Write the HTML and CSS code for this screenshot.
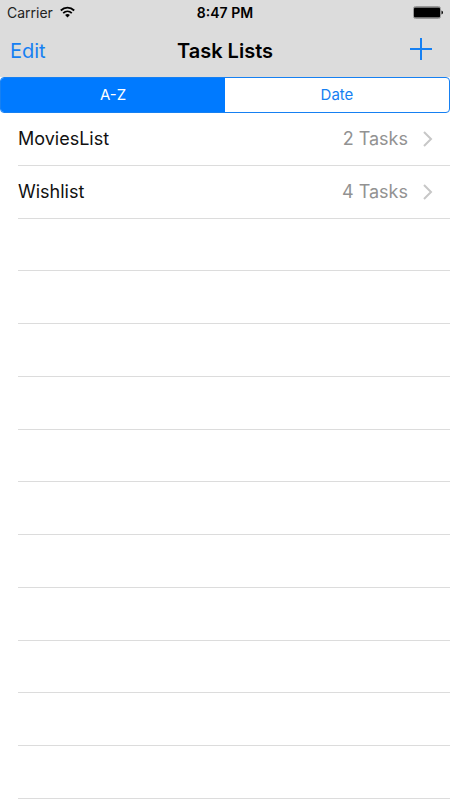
FILE: index.html
```html
<!DOCTYPE html>
<html lang="en">
<head>
<meta charset="utf-8">
<meta name="viewport" content="width=device-width, initial-scale=1">
<title>Task Lists</title>
<link rel="stylesheet" href="styles.css">
</head>
<body>
<header class="top">
  <div class="status">
    <div class="carrier">
      <span>Carrier</span>
      <svg class="wifi" width="15" height="12" viewBox="0 0 15 12" aria-hidden="true">
        <g fill="none" stroke="#000" stroke-width="1.8">
          <path d="M.8 4.5C4.6.7 10.4.7 14.2 4.5"/>
          <path d="M3.2 7.1c2.5-2.4 6.1-2.4 8.6 0"/>
        </g>
        <path d="M5.1 8.9c1.4-1.3 3.4-1.3 4.8 0L7.5 11.4z"/>
      </svg>
    </div>
    <time class="clock">8:47 PM</time>
    <svg class="battery" width="30" height="13" viewBox="0 0 30 13" aria-hidden="true">
      <rect x=".5" y=".5" width="27" height="12" rx="2" fill="none" stroke="#999"/>
      <rect x="1" y="1.500" width="26" height="10" rx="1"/>
      <path d="M28.500 4.500q1.500.5 1.500 2t-1.500 2z"/>
    </svg>
  </div>
  <nav class="navbar">
    <button class="edit" type="button">Edit</button>
    <h1 class="title">Task Lists</h1>
    <button class="add" type="button" aria-label="Add">
      <svg width="22" height="22" viewBox="0 0 22 22" aria-hidden="true"><path d="M11 0v22M0 11h22" stroke="#1680f2" stroke-width="2"/></svg>
    </button>
  </nav>
</header>
<main class="content">
  <div class="segments">
    <button class="segment selected" type="button" aria-pressed="true">A-Z</button>
    <button class="segment" type="button" aria-pressed="false">Date</button>
  </div>
  <ul class="list">
    <li class="row"><a class="link" href="#movies"><span class="name">MoviesList</span><span class="count">2 Tasks</span><svg class="chevron" width="10" height="16" viewBox="0 0 10 16" aria-hidden="true"><path d="M1 1l7 7-7 7"/></svg></a></li>
    <li class="row"><a class="link" href="#wishlist"><span class="name">Wishlist</span><span class="count">4 Tasks</span><svg class="chevron" width="10" height="16" viewBox="0 0 10 16" aria-hidden="true"><path d="M1 1l7 7-7 7"/></svg></a></li>
    <li class="row"></li>
    <li class="row"></li>
    <li class="row"></li>
    <li class="row"></li>
    <li class="row"></li>
    <li class="row"></li>
    <li class="row"></li>
    <li class="row"></li>
    <li class="row"></li>
    <li class="row"></li>
    <li class="row"></li>
  </ul>
</main>
</body>
</html>
```
FILE: styles.css
```css
* {
  box-sizing: border-box;
}

body {
  margin: 0;
  min-height: 100vh;
  display: flex;
  flex-direction: column;
  background: #fff;
  color: #000;
  font-family: Inter, "Liberation Sans", sans-serif;
  font-size: 18px;
}

button {
  margin: 0;
  padding: 0;
  border: 0;
  background: none;
  color: #1680f2;
  font: inherit;
}

.top {
  background: #dcdcdc;
}

.status {
  display: grid;
  grid-template-columns: 1fr auto 1fr;
  align-items: center;
  height: 24px;
  padding: 0 7px;
  font-size: 14px;
}

.carrier {
  display: flex;
  align-items: center;
  gap: 7px;
  color: #222;
}

.clock {
  font-weight: 600;
}

.battery {
  justify-self: end;
}

.navbar {
  display: grid;
  grid-template-columns: 1fr auto 1fr;
  align-items: center;
  height: 53px;
  padding: 0 10px;
}

.edit {
  justify-self: start;
  font-size: 20px;
}

.title {
  margin: 0;
  font-size: 20px;
  font-weight: 600;
}

.add {
  display: flex;
  justify-self: end;
  padding: 0 8px 4px 0;
}

.content {
  flex: 1;
  display: flex;
  flex-direction: column;
  padding-bottom: 1px;
}

.segments {
  display: flex;
  height: 36px;
  border: 1px solid #1680f2;
  border-radius: 4px;
  overflow: hidden;
  font-size: 15px;
}

.segment {
  flex: 1;
  padding-bottom: 2px;
}

.selected {
  background: #007aff;
  color: #fff;
}

.list {
  flex: 1;
  display: grid;
  grid-auto-rows: 1fr;
  margin: 0;
  padding: 0 0 0 18px;
  list-style: none;
}

.row {
  display: flex;
  border-bottom: 1px solid #dcdcdc;
}

.link {
  flex: 1;
  display: flex;
  align-items: center;
  padding-right: 17px;
  color: #111;
  text-decoration: none;
}

.count {
  margin-left: auto;
  color: #929292;
}

.chevron {
  margin-left: 15px;
  fill: none;
  stroke: #c7c7c7;
  stroke-width: 2;
}
```
